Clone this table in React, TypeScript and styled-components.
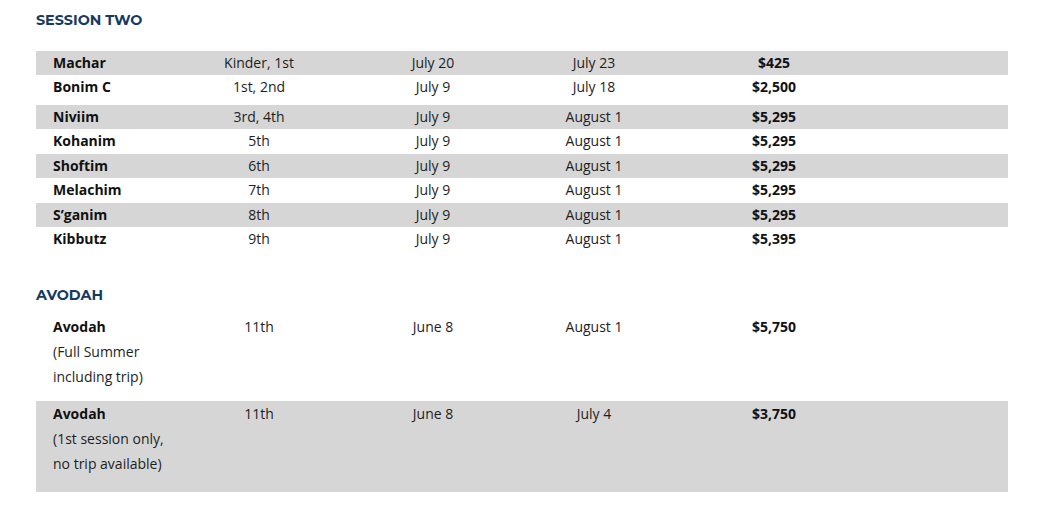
import React from "react";
import styled, { createGlobalStyle } from "styled-components";

const Global = createGlobalStyle`
  html, body { margin: 0; padding: 0; background: #ffffff; }
  body { font-family: "Open Sans", "Liberation Sans", sans-serif; color: #1e1e1e; }
`;

const Page = styled.div`
  padding: 10px 37px 0 36px;
  width: 1045px;
  box-sizing: border-box;
`;

const Heading = styled.h2<{ $top: number }>`
  margin: ${(p) => p.$top}px 0 0 0;
  font-family: "Montserrat", "Open Sans", "Liberation Sans", sans-serif;
  font-weight: 700;
  font-size: 14.3px;
  line-height: 20px;
  color: #163a62;
`;

const Table = styled.div<{ $top: number }>`
  margin-top: ${(p) => p.$top}px;
  display: flex;
  flex-direction: column;
`;

const Row = styled.div<{ $shaded?: boolean; $padTop?: number; $padBottom?: number; $lh?: number }>`
  display: grid;
  grid-template-columns: 150px 146px 202px 120px 240px 1fr;
  background: ${(p) => (p.$shaded ? "#d6d6d6" : "transparent")};
  padding-top: ${(p) => p.$padTop ?? 0}px;
  padding-bottom: ${(p) => p.$padBottom ?? 0}px;
  font-size: 14px;
  line-height: ${(p) => p.$lh ?? 24.5}px;
`;

const NameCell = styled.div`
  padding-left: 17px;
  font-weight: 700;
  color: #111;
`;

const Note = styled.div`
  font-weight: 400;
  color: #1e1e1e;
`;

const Cell = styled.div<{ $bold?: boolean }>`
  text-align: center;
  font-weight: ${(p) => (p.$bold ? 700 : 400)};
  color: ${(p) => (p.$bold ? "#111" : "#1e1e1e")};
`;

type Session = { name: string; grade: string; start: string; end: string; price: string; pad?: number };

const sessionTwo: Session[] = [
  { name: "Machar", grade: "Kinder, 1st", start: "July 20", end: "July 23", price: "$425" },
  { name: "Bonim C", grade: "1st, 2nd", start: "July 9", end: "July 18", price: "$2,500", pad: 5 },
  { name: "Niviim", grade: "3rd, 4th", start: "July 9", end: "August 1", price: "$5,295" },
  { name: "Kohanim", grade: "5th", start: "July 9", end: "August 1", price: "$5,295" },
  { name: "Shoftim", grade: "6th", start: "July 9", end: "August 1", price: "$5,295" },
  { name: "Melachim", grade: "7th", start: "July 9", end: "August 1", price: "$5,295" },
  { name: "S\u2019ganim", grade: "8th", start: "July 9", end: "August 1", price: "$5,295" },
  { name: "Kibbutz", grade: "9th", start: "July 9", end: "August 1", price: "$5,395" },
];

type Avodah = { notes: string[]; end: string; price: string; padTop: number; pad: number };

const avodah: Avodah[] = [
  { notes: ["(Full Summer", "including trip)"], end: "August 1", price: "$5,750", padTop: 1, pad: 12 },
  { notes: ["(1st session only,", "no trip available)"], end: "July 4", price: "$3,750", padTop: 0, pad: 16 },
];

export default function App() {
  return (
    <>
      <Global />
      <Page>
        <Heading $top={0}>SESSION TWO</Heading>
        <Table $top={20.5}>
          {sessionTwo.map((s, i) => (
            <Row key={s.name} $shaded={i % 2 === 0} $padBottom={s.pad}>
              <NameCell>{s.name}</NameCell>
              <Cell>{s.grade}</Cell>
              <Cell>{s.start}</Cell>
              <Cell>{s.end}</Cell>
              <Cell $bold>{s.price}</Cell>
              <div />
            </Row>
          ))}
        </Table>
        <Heading $top={33}>AVODAH</Heading>
        <Table $top={8}>
          {avodah.map((a, i) => (
            <Row key={a.price} $shaded={i % 2 === 1} $padTop={a.padTop} $padBottom={a.pad} $lh={25}>
              <NameCell>
                Avodah
                {a.notes.map((n) => (
                  <Note key={n}>{n}</Note>
                ))}
              </NameCell>
              <Cell>11th</Cell>
              <Cell>June 8</Cell>
              <Cell>{a.end}</Cell>
              <Cell $bold>{a.price}</Cell>
              <div />
            </Row>
          ))}
        </Table>
      </Page>
    </>
  );
}
